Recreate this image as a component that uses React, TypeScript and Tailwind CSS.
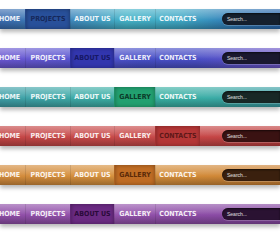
import React from 'react';

type Bar = {
  bg: string;
  active: number;
  activeBg: string;
  activeText: string;
  search: string;
};

const items = ['HOME', 'PROJECTS', 'ABOUT US', 'GALLERY', 'CONTACTS'];
const widths = ['w-[31px]', 'w-[45px]', 'w-[44px]', 'w-[41px]', 'w-[45px]'];

const bars: Bar[] = [
  {
    bg: 'bg-[linear-gradient(90deg,#3a6cb0_0%,#3f88bd_25%,#45b4c9_45%,#3fa8c6_65%,#2f78b6_85%,#2a68ac_100%)]',
    active: 1,
    activeBg: 'bg-[#28509a]',
    activeText: 'text-[#16285a]',
    search: 'bg-[#15202e]',
  },
  {
    bg: 'bg-[linear-gradient(90deg,#6b58d2_0%,#5a56d0_25%,#4850c8_50%,#4a4fc6_70%,#5c52c8_85%,#6a54c6_100%)]',
    active: 2,
    activeBg: 'bg-[#3236ae]',
    activeText: 'text-[#161866]',
    search: 'bg-[#1a1830]',
  },
  {
    bg: 'bg-[linear-gradient(90deg,#3f9fa8_0%,#3eaca8_30%,#38b2a2_50%,#3aaca6_75%,#3a9ea4_100%)]',
    active: 3,
    activeBg: 'bg-[#22a070]',
    activeText: 'text-[#0b3a28]',
    search: 'bg-[#182826]',
  },
  {
    bg: 'bg-[linear-gradient(90deg,#c44646_0%,#c84a4a_40%,#c64646_70%,#c04040_100%)]',
    active: 4,
    activeBg: 'bg-[#b43636]',
    activeText: 'text-[#5e1818]',
    search: 'bg-[#3a1212]',
  },
  {
    bg: 'bg-[linear-gradient(90deg,#d38b3c_0%,#d6913e_40%,#d28a38_70%,#cc8234_100%)]',
    active: 3,
    activeBg: 'bg-[#bf6c24]',
    activeText: 'text-[#5a2a08]',
    search: 'bg-[#3a200e]',
  },
  {
    bg: 'bg-[linear-gradient(90deg,#8f4ea8_0%,#9452ac_40%,#8c4ca6_70%,#8648a2_100%)]',
    active: 2,
    activeBg: 'bg-[#6a2a82]',
    activeText: 'text-[#2a0a3a]',
    search: 'bg-[#2a1232]',
  },
];

function NavBar({ bar }: { bar: Bar }) {
  return (
    <div className={`relative h-[20px] w-full overflow-hidden shadow-[0_3px_4px_rgba(0,0,0,0.28)] ${bar.bg}`}>
      <div className="absolute inset-0 bg-[linear-gradient(180deg,rgba(255,255,255,0.38)_0%,rgba(255,255,255,0.12)_40%,rgba(0,0,0,0)_55%,rgba(0,0,0,0.28)_100%)]" />
      <div className="relative flex h-full items-stretch ml-[-6px]">
        {items.map((label, i) => {
          const isActive = i === bar.active;
          return (
            <div
              key={label}
              className={`flex items-center justify-center ${widths[i]} ${
                i > 0 ? 'border-l border-black/10' : ''
              } ${isActive ? `${bar.activeBg} shadow-[inset_0_0_4px_rgba(0,0,0,0.35)]` : ''}`}
            >
              <span
                className={`text-[7px] font-bold leading-none ${
                  isActive ? bar.activeText : 'text-white/90'
                }`}
                style={{ fontFamily: '"DejaVu Sans Condensed", "DejaVu Sans", sans-serif' }}
              >
                {label}
              </span>
            </div>
          );
        })}
        <div className="flex items-center pl-[22px] flex-1">
          <div
            className={`flex h-[12px] w-full items-center rounded-l-full pl-[5px] shadow-[inset_0_1px_2px_rgba(0,0,0,0.6),0_1px_0_rgba(255,255,255,0.2)] ${bar.search}`}
          >
            <span className="text-[5px] leading-none text-white/85 font-['Liberation_Sans',sans-serif]">
              Search...
            </span>
          </div>
        </div>
      </div>
    </div>
  );
}

export default function App() {
  return (
    <div className="w-[280px] h-[235px] bg-white overflow-hidden flex flex-col gap-[19px] pt-[9px]">
      {bars.map((b, i) => (
        <NavBar key={i} bar={b} />
      ))}
    </div>
  );
}
